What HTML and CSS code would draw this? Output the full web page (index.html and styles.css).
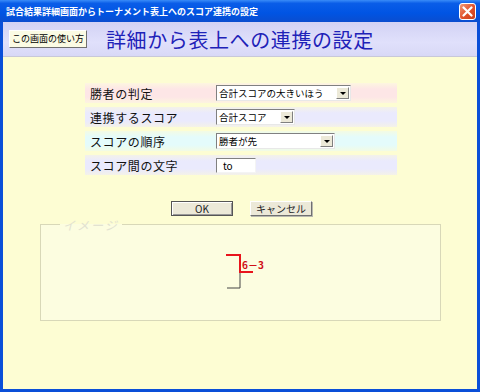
FILE: index.html
```html
<!DOCTYPE html>
<html>

<head>
    <title>詳細から表上への連携の設定</title>
    <link rel="stylesheet" href="styles.css">
</head>

<body>
    <div class="window">
        <div class="titlebar">
            <span class="title">試合結果詳細画面からトーナメント表上へのスコア連携の設定</span>
            <span class="close">
                <svg width="11" height="11" viewBox="0 0 11 11">
                    <path d="M1.5 1.5 L9.5 9.5 M9.5 1.5 L1.5 9.5" stroke="#fff" stroke-width="2.2" stroke-linecap="round"/>
                </svg>
            </span>
        </div>

        <div class="header">
            <div class="help">この画面の使い方</div>
            <h1>詳細から表上への連携の設定</h1>
        </div>

        <div class="content">
            <div class="form">
                <div class="row pink">
                    <div class="label">勝者の判定</div>
                    <div class="select w1"><span>合計スコアの大きいほう</span><i class="arrow"></i></div>
                </div>
                <div class="row lavender">
                    <div class="label">連携するスコア</div>
                    <div class="select w2"><span>合計スコア</span><i class="arrow"></i></div>
                </div>
                <div class="row cyan">
                    <div class="label">スコアの順序</div>
                    <div class="select w3"><span>勝者が先</span><i class="arrow"></i></div>
                </div>
                <div class="row lavender">
                    <div class="label">スコア間の文字</div>
                    <div class="text">to</div>
                </div>
            </div>

            <div class="actions">
                <div class="btn ok">OK</div>
                <div class="btn">キャンセル</div>
            </div>

            <div class="image">
                <div class="legend">イメージ</div>
                <div class="bracket">
                    <svg width="50" height="40" viewBox="0 0 50 40">
                        <path d="M0 1 H14 V18 H27" stroke="#e8141c" stroke-width="2" fill="none"/>
                        <path d="M14 19 V34 H1" stroke="#444" stroke-width="1" fill="none"/>
                        <text x="16" y="15" class="score">6－3</text>
                    </svg>
                </div>
            </div>
        </div>
    </div>
</body>

</html>
```

FILE: styles.css
```css
body {
    margin: 0;
    font-family: "Noto Sans CJK JP", "Liberation Sans", sans-serif;
}

.window {
    width: 480px;
    height: 392px;
    box-sizing: border-box;
    background-color: #0a4fd8;
    padding: 0 3px 3px 3px;
    display: flex;
    flex-direction: column;
    overflow: hidden;
}

.titlebar {
    height: 22px;
    margin: 0 -3px;
    padding: 0 4px 0 6px;
    display: flex;
    align-items: center;
    justify-content: space-between;
    background: linear-gradient(to bottom, #3a8cf8 0%, #0a5de8 15%, #0054e3 60%, #0a4dcf 100%);
}

.title {
    color: #fff;
    font-size: 9px;
    font-weight: bold;
}

.close {
    width: 17px;
    height: 17px;
    box-sizing: border-box;
    border: 1px solid #fff;
    border-radius: 3px;
    background: linear-gradient(to bottom right, #f09a78, #e0502a 55%, #c8401c);
    display: flex;
    align-items: center;
    justify-content: center;
}

.header {
    height: 34px;
    display: flex;
    align-items: center;
    padding-left: 6px;
    background: linear-gradient(to bottom, #d2d2f4, #e0e0fb 60%, #d8d8f6);
    border-bottom: 1px solid #c8c8d8;
}

.help {
    font-size: 9px;
    padding: 1px 2px;
    background-color: #fbfbe4;
    border: 1px solid;
    border-color: #fff #707070 #707070 #fff;
    color: #000;
    line-height: 14px;
}

.header h1 {
    margin: 0 0 0 19px;
    font-size: 20px;
    font-weight: normal;
    color: #1e22b8;
    letter-spacing: 0.6px;
    font-family: "Noto Sans CJK JP", serif;
}

.content {
    flex: 1;
    background-color: #fdfdd3;
    padding-top: 26px;
}

.form {
    width: 312px;
    margin-left: 82px;
    display: flex;
    flex-direction: column;
    gap: 4px;
}

.row {
    height: 20px;
    display: flex;
    align-items: center;
}

.row.pink {
    background: linear-gradient(to bottom, #fdf6e0, #fde6e6 30%, #fde6e6 70%, #fdf4e0);
}

.row.lavender {
    background: linear-gradient(to bottom, #f4f2e8, #eaeafd 30%, #eaeafd 70%, #f4f2e8);
}

.row.cyan {
    background: linear-gradient(to bottom, #f3fbe4, #e4fbfb 30%, #e4fbfb 70%, #f3fbe4);
}

.label {
    width: 126px;
    padding-left: 5px;
    font-size: 12px;
    color: #111;
    letter-spacing: 0.6px;
}

.select {
    height: 16px;
    box-sizing: border-box;
    background-color: #fff;
    border: 1px solid;
    border-color: #808080 #e8e8e8 #e8e8e8 #808080;
    display: flex;
    align-items: center;
    justify-content: space-between;
    font-size: 9.5px;
    padding-left: 2px;
}

.select.w1 {
    width: 135px;
}

.select.w2 {
    width: 79px;
}

.select.w3 {
    width: 119px;
}

.arrow {
    width: 13px;
    height: 12px;
    margin-right: 1px;
    box-sizing: border-box;
    background-color: #ece9d8;
    border: 1px solid;
    border-color: #fff #808080 #808080 #fff;
    position: relative;
}

.arrow::after {
    content: "";
    position: absolute;
    left: 3px;
    top: 4px;
    border-left: 3px solid transparent;
    border-right: 3px solid transparent;
    border-top: 3px solid #000;
}

.text {
    width: 40px;
    height: 15px;
    box-sizing: border-box;
    background-color: #fff;
    border: 1px solid;
    border-color: #808080 #f4f4f4 #f4f4f4 #808080;
    font-size: 10px;
    padding-left: 6px;
    line-height: 13px;
}

.actions {
    display: flex;
    gap: 17px;
    margin: 26px 0 0 168px;
}

.btn {
    width: 62px;
    height: 15px;
    box-sizing: border-box;
    background-color: #ece9d8;
    border: 1px solid;
    border-color: #fff #707070 #707070 #fff;
    box-shadow: 1px 1px 0 #b8b8b0;
    font-size: 10px;
    line-height: 13px;
    text-align: center;
    color: #222;
}

.btn.ok {
    border-color: #555;
    box-shadow: inset 1px 1px 0 #fff, inset -1px -1px 0 #999;
}

.image {
    margin: 8px 0 0 37px;
    width: 401px;
    height: 97px;
    box-sizing: border-box;
    border: 1px solid #d8d8b8;
    background-color: #fcfde0;
    position: relative;
}

.legend {
    position: absolute;
    top: -9px;
    left: 19px;
    padding: 0 3px;
    background: linear-gradient(to bottom, #fdfdd3 50%, #fcfde0 50%);
    font-size: 12px;
    font-style: italic;
    color: #e2e2d0;
    letter-spacing: 2px;
}

.bracket {
    margin: 29px 0 0 185px;
    width: 50px;
    height: 40px;
}

.score {
    font-family: "Noto Sans CJK JP", sans-serif;
    font-size: 10px;
    font-weight: bold;
    fill: #d01018;
}
```
